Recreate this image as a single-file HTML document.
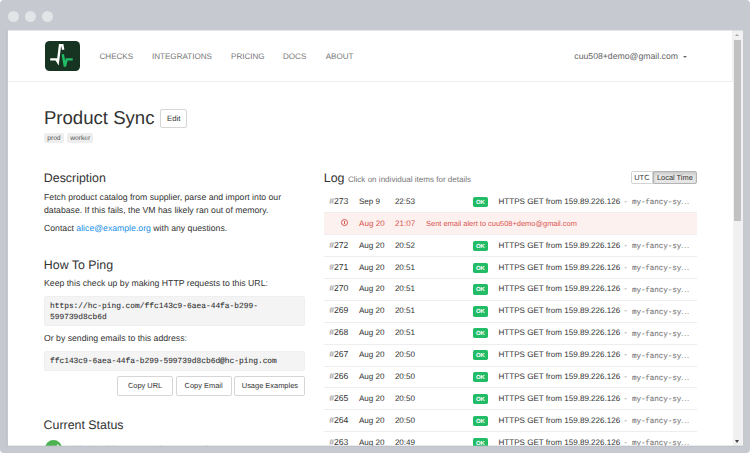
<!DOCTYPE html>
<html><head><meta charset="utf-8">
<style>
*{box-sizing:border-box;margin:0;padding:0}
html,body{width:750px;height:453px;overflow:hidden;background:#fff}
body{font-family:"Liberation Sans",sans-serif;color:#333;position:relative;text-rendering:geometricPrecision}
.frame{position:absolute;left:0;top:0;width:750px;height:453px;background:#c6c9d0;border-radius:4px}
.dot{position:absolute;top:10.5px;width:11px;height:11px;border-radius:50%;background:#e3e4e7}
.view{position:absolute;left:8px;top:30px;width:734.5px;height:416px;background:#fff;overflow:hidden}
.sb{position:absolute;right:0;top:0;width:9.5px;height:100%;background:#f1f1f1}
.thumb{position:absolute;left:1px;top:10px;width:7px;height:181px;background:#c1c1c1}
.abs{position:absolute;white-space:nowrap}
.nav{font-size:8.07px;color:#777;line-height:10px}
.navline{position:absolute;left:0;top:51px;width:725px;height:1px;background:#eee}
.navr{position:absolute;left:724.3px;top:0;width:1px;height:52px;background:#efefef}
.logo{position:absolute;left:37px;top:10.5px;width:35px;height:30px;background:#173422;border-radius:4.5px}
h1{font-weight:normal;font-size:18.6px;line-height:22px;color:#333}
h2{font-weight:normal;font-size:12.4px;line-height:14px;color:#333}
.p{font-size:8.7px;line-height:12.6px;color:#333}
.btn{position:absolute;border:1px solid #d6d6d6;border-radius:2px;background:#fff;font-size:7.45px;color:#333;text-align:center;white-space:nowrap}
.tag{position:absolute;top:103px;height:9.8px;background:#eee;border-radius:1.5px;font-size:6.7px;line-height:11px;overflow:hidden;color:#555;text-align:center}
.code{position:absolute;left:35.6px;width:261px;background:#f4f4f4;border:0.6px solid #efefef;border-radius:2px;-webkit-text-stroke:0.1px #333;font-family:"Liberation Mono",monospace;font-size:7.88px;color:#333}
a{color:#1a8fe6;text-decoration:none}
.row{position:absolute;left:316px;width:373px;height:22px;font-size:8.07px;color:#333}
.sep{box-shadow:inset 0 1px 0 #eee}
.row>span{position:absolute;top:0.5px;line-height:21px;white-space:nowrap}
.hash{color:#8a8a8a}
.ok{position:absolute;left:148.7px;top:6.6px;width:15.4px;height:10.2px;background:#22bc66;border-radius:1.8px;color:#fff;font-weight:bold;font-size:6px;line-height:12.4px;text-align:center;overflow:hidden}
.mono{font-family:"Liberation Mono",monospace;font-size:7.7px;letter-spacing:-0.12px;color:#7a7a7a;-webkit-text-stroke:0.1px #7a7a7a}
.alert{background:#fdf1f0;color:#d9534f}
.ico{position:absolute;width:7.1px;height:7.1px;border:0.9px solid #d9534f;border-radius:50%}
.ico:after{content:"";position:absolute;left:2.15px;top:1.3px;width:0.9px;height:2.6px;background:#d9534f}
</style></head><body>
<div class="frame"></div>
<div class="dot" style="left:7.5px"></div>
<div class="dot" style="left:24.5px"></div>
<div class="dot" style="left:41.5px"></div>
<div class="view">
  <!-- nav -->
  <div class="logo">
    <svg width="35" height="30" viewBox="45 40.5 35 30" style="position:absolute;left:0;top:0">
      <polyline points="50.2,58.9 56.2,58.9 57.9,61.6 60,44.7 62.4,44.7 63.2,49.3" fill="none" stroke="#fff" stroke-width="2.4" stroke-linejoin="miter"/>
      <polyline points="62.8,53.8 64.9,66 66.7,58.9 72.7,58.9" fill="none" stroke="#22bc66" stroke-width="2.4"/>
    </svg>
  </div>
  <div class="abs nav" style="left:91.5px;top:22px">CHECKS</div>
  <div class="abs nav" style="left:144px;top:22px">INTEGRATIONS</div>
  <div class="abs nav" style="left:223px;top:22px">PRICING</div>
  <div class="abs nav" style="left:275px;top:22px">DOCS</div>
  <div class="abs nav" style="left:317.7px;top:22px">ABOUT</div>
  <div class="abs nav" style="left:566.3px;top:21.2px;font-size:8.7px;color:#666">cuu508+demo@gmail.com</div>
  <div class="abs" style="left:675px;top:26px;width:0;height:0;border-left:2.2px solid transparent;border-right:2.2px solid transparent;border-top:2.2px solid #666"></div>
  <div class="navline"></div><div class="navr"></div>

  <!-- title -->
  <h1 class="abs" style="left:35.9px;top:76.9px">Product Sync</h1>
  <div class="btn" style="left:152.3px;top:79px;width:26.4px;height:19px;line-height:17.9px;font-size:7.7px;padding-left:0.5px">Edit</div>
  <div class="tag" style="left:36px;width:19.8px">prod</div>
  <div class="tag" style="left:59.2px;width:26px">worker</div>

  <!-- left column -->
  <h2 class="abs" style="left:35.8px;top:141px">Description</h2>
  <div class="abs p" style="left:36px;top:160.9px;line-height:12.8px">Fetch product catalog from supplier, parse and import into our<br>database. If this fails, the VM has likely ran out of memory.</div>
  <div class="abs p" style="left:36px;top:192.3px">Contact <a>alice@example.org</a> with any questions.</div>

  <h2 class="abs" style="left:35.8px;top:228px">How To Ping</h2>
  <div class="abs p" style="left:36px;top:247px">Keep this check up by making HTTP requests to this URL:</div>
  <div class="code" style="top:265.7px;height:30.8px;padding:5.4px 5.4px;line-height:10.8px">https://hc-ping.com/ffc143c9-6aea-44fa-b299-<br>599739d8cb6d</div>
  <div class="abs p" style="left:36px;top:302px">Or by sending emails to this address:</div>
  <div class="code" style="top:320.6px;height:20.6px;padding:5.9px 5.4px 0;line-height:10.1px">ffc143c9-6aea-44fa-b299-599739d8cb6d@hc-ping.com</div>
  <div class="btn" style="left:109.2px;top:346.3px;width:55.7px;height:19.3px;line-height:17.5px">Copy URL</div>
  <div class="btn" style="left:167.6px;top:346.3px;width:56px;height:19.3px;line-height:17.5px">Copy Email</div>
  <div class="btn" style="left:226.3px;top:346.3px;width:71.2px;height:19.3px;line-height:17.5px">Usage Examples</div>

  <h2 class="abs" style="left:35.6px;top:388px">Current Status</h2>
  <div class="abs" style="left:37.2px;top:410px;width:17.1px;height:17.1px;border-radius:50%;background:#4db251"><svg width="17" height="17" style="position:absolute;left:0;top:0"><polyline points="5,9.4 7.8,12.2 13.4,4.8" fill="none" stroke="#fff" stroke-width="1.5"/></svg></div>
  <div class="abs p" style="left:61px;top:412.7px;color:#333">This check is up. Last ping was 2 minutes ago.</div>

  <!-- log -->
  <h2 class="abs" style="left:315.8px;top:141px">Log <span style="font-size:8.07px;color:#777">Click on individual items for details</span></h2>
  <div class="abs" style="left:622.8px;top:140.6px;width:66px;height:13.8px;font-size:7.45px;line-height:11.8px">
    <div style="position:absolute;left:0;top:0;width:22.2px;height:13.8px;border:1px solid #d3d3d3;border-radius:2px 0 0 2px;background:#fff;text-align:center">UTC</div>
    <div style="position:absolute;left:22.2px;top:0;width:43.8px;height:13.8px;border:1px solid #b3b3b3;border-radius:0 2px 2px 0;background:#e6e6e6;box-shadow:inset 0 2px 3px rgba(0,0,0,.125);text-align:center">Local Time</div>
  </div>
  <!--rows--><div class="row" style="top:160.30px;"><span style="left:5.2px;font-size:8.65px"><span class="hash">#</span>273</span><span style="left:34.9px">Sep 9</span><span style="left:70.9px">22:53</span><div class="ok">OK</div><span style="left:174.5px">HTTPS GET from 159.89.226.126</span><span style="left:300.2px;color:#888">-</span><span class="mono" style="left:307.9px;top:1.1px">my-fancy-sy<span style="font-family:Liberation Sans,sans-serif;letter-spacing:0.75px;font-size:7.6px">...</span></span></div>
<div class="row alert sep" style="top:182.20px;"><span class="ico" style="left:17.1px;top:6.6px"></span><span style="left:35.1px">Aug 20</span><span style="left:71.1px">21:07</span><span style="left:102.1px;font-size:7.45px">Sent email alert to cuu508+demo@gmail.com</span></div>
<div class="row sep" style="top:204.10px;"><span style="left:5.2px;font-size:8.65px"><span class="hash">#</span>272</span><span style="left:34.9px">Aug 20</span><span style="left:70.9px">20:52</span><div class="ok">OK</div><span style="left:174.5px">HTTPS GET from 159.89.226.126</span><span style="left:300.2px;color:#888">-</span><span class="mono" style="left:307.9px;top:1.1px">my-fancy-sy<span style="font-family:Liberation Sans,sans-serif;letter-spacing:0.75px;font-size:7.6px">...</span></span></div>
<div class="row sep" style="top:226.00px;"><span style="left:5.2px;font-size:8.65px"><span class="hash">#</span>271</span><span style="left:34.9px">Aug 20</span><span style="left:70.9px">20:51</span><div class="ok">OK</div><span style="left:174.5px">HTTPS GET from 159.89.226.126</span><span style="left:300.2px;color:#888">-</span><span class="mono" style="left:307.9px;top:1.1px">my-fancy-sy<span style="font-family:Liberation Sans,sans-serif;letter-spacing:0.75px;font-size:7.6px">...</span></span></div>
<div class="row sep" style="top:247.90px;"><span style="left:5.2px;font-size:8.65px"><span class="hash">#</span>270</span><span style="left:34.9px">Aug 20</span><span style="left:70.9px">20:51</span><div class="ok">OK</div><span style="left:174.5px">HTTPS GET from 159.89.226.126</span><span style="left:300.2px;color:#888">-</span><span class="mono" style="left:307.9px;top:1.1px">my-fancy-sy<span style="font-family:Liberation Sans,sans-serif;letter-spacing:0.75px;font-size:7.6px">...</span></span></div>
<div class="row sep" style="top:269.80px;"><span style="left:5.2px;font-size:8.65px"><span class="hash">#</span>269</span><span style="left:34.9px">Aug 20</span><span style="left:70.9px">20:51</span><div class="ok">OK</div><span style="left:174.5px">HTTPS GET from 159.89.226.126</span><span style="left:300.2px;color:#888">-</span><span class="mono" style="left:307.9px;top:1.1px">my-fancy-sy<span style="font-family:Liberation Sans,sans-serif;letter-spacing:0.75px;font-size:7.6px">...</span></span></div>
<div class="row sep" style="top:291.70px;"><span style="left:5.2px;font-size:8.65px"><span class="hash">#</span>268</span><span style="left:34.9px">Aug 20</span><span style="left:70.9px">20:51</span><div class="ok">OK</div><span style="left:174.5px">HTTPS GET from 159.89.226.126</span><span style="left:300.2px;color:#888">-</span><span class="mono" style="left:307.9px;top:1.1px">my-fancy-sy<span style="font-family:Liberation Sans,sans-serif;letter-spacing:0.75px;font-size:7.6px">...</span></span></div>
<div class="row sep" style="top:313.60px;"><span style="left:5.2px;font-size:8.65px"><span class="hash">#</span>267</span><span style="left:34.9px">Aug 20</span><span style="left:70.9px">20:50</span><div class="ok">OK</div><span style="left:174.5px">HTTPS GET from 159.89.226.126</span><span style="left:300.2px;color:#888">-</span><span class="mono" style="left:307.9px;top:1.1px">my-fancy-sy<span style="font-family:Liberation Sans,sans-serif;letter-spacing:0.75px;font-size:7.6px">...</span></span></div>
<div class="row sep" style="top:335.50px;"><span style="left:5.2px;font-size:8.65px"><span class="hash">#</span>266</span><span style="left:34.9px">Aug 20</span><span style="left:70.9px">20:50</span><div class="ok">OK</div><span style="left:174.5px">HTTPS GET from 159.89.226.126</span><span style="left:300.2px;color:#888">-</span><span class="mono" style="left:307.9px;top:1.1px">my-fancy-sy<span style="font-family:Liberation Sans,sans-serif;letter-spacing:0.75px;font-size:7.6px">...</span></span></div>
<div class="row sep" style="top:357.40px;"><span style="left:5.2px;font-size:8.65px"><span class="hash">#</span>265</span><span style="left:34.9px">Aug 20</span><span style="left:70.9px">20:50</span><div class="ok">OK</div><span style="left:174.5px">HTTPS GET from 159.89.226.126</span><span style="left:300.2px;color:#888">-</span><span class="mono" style="left:307.9px;top:1.1px">my-fancy-sy<span style="font-family:Liberation Sans,sans-serif;letter-spacing:0.75px;font-size:7.6px">...</span></span></div>
<div class="row sep" style="top:379.30px;"><span style="left:5.2px;font-size:8.65px"><span class="hash">#</span>264</span><span style="left:34.9px">Aug 20</span><span style="left:70.9px">20:50</span><div class="ok">OK</div><span style="left:174.5px">HTTPS GET from 159.89.226.126</span><span style="left:300.2px;color:#888">-</span><span class="mono" style="left:307.9px;top:1.1px">my-fancy-sy<span style="font-family:Liberation Sans,sans-serif;letter-spacing:0.75px;font-size:7.6px">...</span></span></div>
<div class="row sep" style="top:401.20px;"><span style="left:5.2px;font-size:8.65px"><span class="hash">#</span>263</span><span style="left:34.9px">Aug 20</span><span style="left:70.9px">20:49</span><div class="ok">OK</div><span style="left:174.5px">HTTPS GET from 159.89.226.126</span><span style="left:300.2px;color:#888">-</span><span class="mono" style="left:307.9px;top:1.1px">my-fancy-sy<span style="font-family:Liberation Sans,sans-serif;letter-spacing:0.75px;font-size:7.6px">...</span></span></div><!--/rows-->
</div>
<div class="sb" style="position:absolute;left:733.2px;top:30px;width:9.4px;height:416px;background:#f1f1f1">
  <div style="position:absolute;left:1px;top:10px;width:7px;height:181px;background:#c1c1c1"></div>
  <div style="position:absolute;left:2.3px;top:4px;width:0;height:0;border-left:2.4px solid transparent;border-right:2.4px solid transparent;border-bottom:2.8px solid #a3a3a3"></div>
  <div style="position:absolute;left:2.1px;top:409.5px;width:0;height:0;border-left:2.5px solid transparent;border-right:2.5px solid transparent;border-top:3px solid #404040"></div>
</div>
<div style="position:absolute;left:6px;top:30px;width:1px;height:416px;background:#bfc2c9"></div>
<div style="position:absolute;left:7px;top:30px;width:1px;height:416px;background:rgba(196,199,206,.45)"></div>
<div style="position:absolute;left:7px;top:30px;width:736px;height:1px;background:rgba(196,199,206,.45)"></div>
<div style="position:absolute;left:7px;top:445px;width:736px;height:1px;background:rgba(196,199,206,.35)"></div>
<div style="position:absolute;left:7px;top:446px;width:736px;height:1px;background:#bfc2c9"></div>
</body></html>
